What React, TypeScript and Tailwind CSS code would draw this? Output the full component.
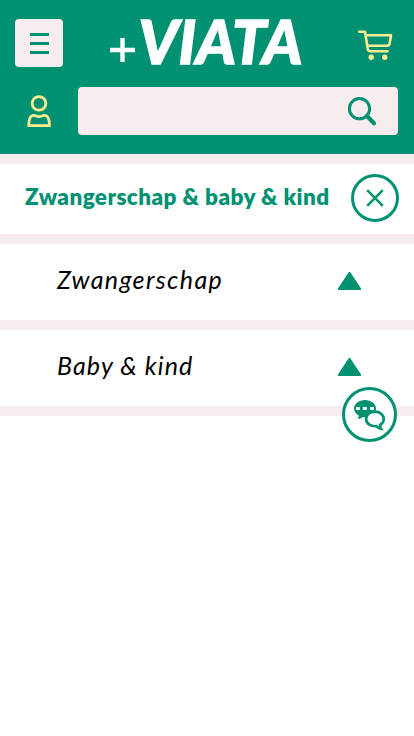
import React from "react";

function Logo() {
  return (
    <svg className="absolute left-[104px] top-[0px] overflow-visible" width="216" height="86" viewBox="104 0 216 86" role="img" aria-label="+VIATA">
      <path d="M122.5 38v24M110 50h25" stroke="#fff" strokeWidth="4.4" fill="none" />
      <text
        x="138.5"
        y="64.3"
        textLength="164"
        lengthAdjust="spacingAndGlyphs"
        stroke="#fff"
        strokeWidth="1.4"
        className="fill-white font-['Lato',sans-serif] text-[60.5px] font-black italic"
      >
        VIATA
      </text>
    </svg>
  );
}

function CartIcon() {
  return (
    <svg width="36" height="32" viewBox="357 29 36 32" fill="none" stroke="#fdec8f" strokeWidth="2.6" strokeLinecap="round" strokeLinejoin="round">
      <path d="M359.2 31.7H365L367.8 49Q368.3 51.3 370.5 51.3H387.5" />
      <path d="M365.8 35.2H391L389.6 43.6Q389.2 45.8 387 45.8H367.5" />
      <circle cx="371.2" cy="57.3" r="2.7" fill="#fdec8f" stroke="none" />
      <circle cx="384.7" cy="57.3" r="2.7" fill="#fdec8f" stroke="none" />
    </svg>
  );
}

function UserIcon() {
  return (
    <svg width="26" height="34" viewBox="26 94 26 34" fill="none" stroke="#fdec8f" strokeWidth="2.8">
      <circle cx="39" cy="103.4" r="6.8" />
      <path d="M28.8 125.6C28.8 121 29 115.8 33 115.4C35.8 115 36.2 116.6 39 116.6C41.8 116.6 42.2 115 45 115.4C49 115.8 49.4 121 49.4 125.6Z" />
    </svg>
  );
}

function ChatIcon() {
  return (
    <svg width="34" height="34" viewBox="353 398 34 34">
      <path fill="#009172" d="M365 400C371 400 376 403.8 376 408.6C376 413.6 371 417.2 365 417.2C364 417.2 363.5 417.2 362.8 417C361.4 418.2 359.6 419 357.4 419C358.4 417.8 358.8 416.8 358.8 415.6C355.8 414 354 411.5 354 408.6C354 403.8 359 400 365 400Z" />
      <path fill="#fff" d="M356 407h3.8v3H356zM362.8 407h4v3h-4zM370 407h4v3h-4z" />
      <path fill="#fff" stroke="#009172" strokeWidth="2.7" d="M374.9 411.6C380 411.6 383.7 414.7 383.7 418.9C383.7 421.6 382.3 423.6 380 425C379.8 426.4 380.3 427.5 381.1 428.7C378.9 428.4 377.5 427.7 376.4 426.2C370.3 426.7 366.1 423.3 366.1 418.9C366.1 414.7 369.8 411.6 374.9 411.6Z" />
    </svg>
  );
}

function CategoryRow({ label, spacing }: { label: string; spacing: string }) {
  return (
    <li className="flex h-[86px] items-start justify-between border-b-[10px] border-[#f7edee] pl-[57px] pr-[52px]">
      <span className={`mt-[18px] whitespace-nowrap text-[25px] italic leading-[34px] text-black ${spacing}`}>{label}</span>
      <svg className="mt-[27px]" width="25" height="20" viewBox="0 0 25 20">
        <path d="M12.5 1.8L23.2 18H1.8Z" fill="#009172" stroke="#009172" strokeWidth="2" strokeLinejoin="round" />
      </svg>
    </li>
  );
}

export default function App() {
  return (
    <div className="relative h-[736px] w-[414px] overflow-hidden bg-white font-['Lato',sans-serif]">
      <header className="relative h-[154px] bg-[#009172] pt-[19px]">
        <div className="flex h-12 items-center justify-between pl-[15px] pr-[21px]">
          <button className="flex h-12 w-12 flex-col items-center justify-center gap-[6px] rounded-[4px] bg-[#f7edee]" aria-label="Menu">
            <span className="h-[3px] w-[19px] bg-[#009172]" />
            <span className="h-[3px] w-[19px] bg-[#009172]" />
            <span className="h-[3px] w-[19px] bg-[#009172]" />
          </button>
          <div className="mt-1"><CartIcon /></div>
        </div>
        <Logo />
        <div className="mt-5 flex h-12 items-center pl-[26px] pr-4">
          <UserIcon />
          <div className="ml-[26px] flex h-12 flex-1 items-center justify-end rounded-[4px] bg-[#f7edee] pr-[20px]">
            <svg width="32" height="32" viewBox="346 95 32 32" fill="none" stroke="#009172">
              <circle cx="359.5" cy="108.7" r="10.1" strokeWidth="3" />
              <path d="M367 116L374 123.2" strokeWidth="4.2" strokeLinecap="round" />
            </svg>
          </div>
        </div>
      </header>
      <main>
        <div className="flex h-[90px] items-center justify-between border-y-[10px] border-[#f7edee] pl-[25px] pr-[15px]">
          <h1 className="mb-[4px] whitespace-nowrap text-[22.5px] font-extrabold leading-8 tracking-[0.42px] text-[#009172]">Zwangerschap &amp; baby &amp; kind</h1>
          <button className="mb-[2px] flex h-12 w-12 shrink-0 items-center justify-center rounded-full border-[3px] border-[#009172]" aria-label="Sluiten">
            <svg width="18" height="18" viewBox="0 0 18 18" stroke="#009172" strokeWidth="2.5">
              <path d="M1.2 1.2L16.8 16.8M16.8 1.2L1.2 16.8" />
            </svg>
          </button>
        </div>
        <ul>
          <CategoryRow label="Zwangerschap" spacing="tracking-[1.35px]" />
          <CategoryRow label="Baby & kind" spacing="tracking-[1.1px]" />
        </ul>
      </main>
      <button className="absolute left-[342px] top-[387px] flex h-[55px] w-[55px] items-center justify-center rounded-full border-[3px] border-[#009172] bg-white" aria-label="Chat">
        <ChatIcon />
      </button>
    </div>
  );
}
